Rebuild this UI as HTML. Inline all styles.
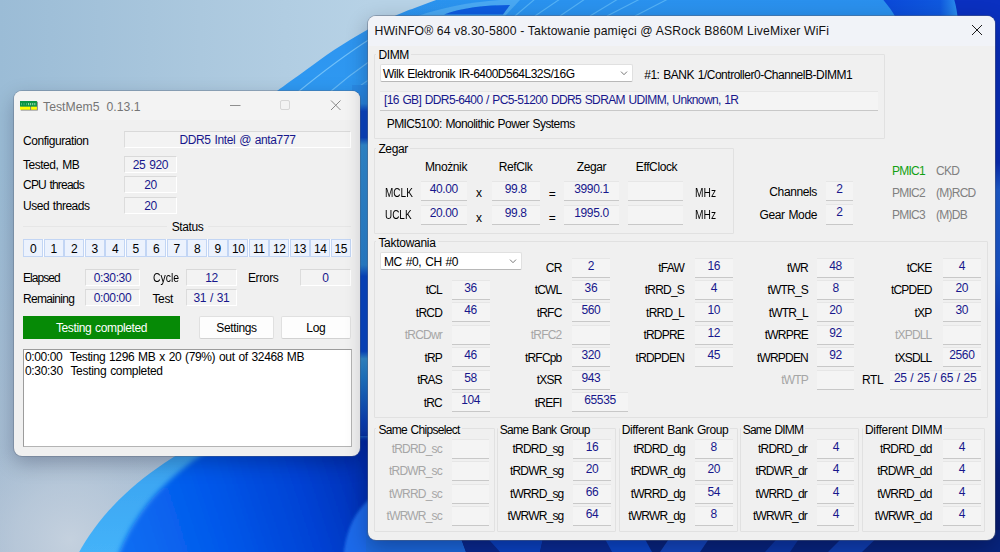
<!DOCTYPE html><html lang="pl"><head><meta charset="utf-8"><title>Desktop</title><style>
*{box-sizing:border-box;margin:0;padding:0}
html,body{width:1000px;height:552px;overflow:hidden;background:#a9c2da}
body{position:relative;font-family:"Liberation Sans",sans-serif;font-size:12px;color:#000;letter-spacing:-0.38px;word-spacing:0.9px}
.abs{position:absolute}
.t{position:absolute;white-space:pre;line-height:14px;height:14px}
.r{text-align:right}
.c{text-align:center}
.nv{color:#17178c}
.gy{color:#a6a6a6}
.g2{color:#808080}
.win{position:absolute;background:#f0f0f0;border-radius:8px;box-shadow:0 0 0 1px rgba(90,100,120,.45),0 8px 22px rgba(0,0,30,.32)}
.tb{position:absolute;left:0;top:0;right:0;background:#f3f3f3;border-radius:8px 8px 0 0}
.ttl{position:absolute;white-space:pre;font-size:12.2px;letter-spacing:0.15px;word-spacing:0;line-height:16px}
.box{position:absolute;background:#f3f3f3;border:1px solid #e3e3e3;border-top-color:#d9d9d9;border-left-color:#dcdcdc;border-bottom-color:#fff;border-right-color:#fff;text-align:center;white-space:pre;color:#17178c}
.vb{position:absolute;background:#f4f4f4;border-bottom:1px solid #c8c8c8;border-top:1px solid #e6e6e6;text-align:center;white-space:pre;color:#17178c}
.grp{position:absolute;border:1px solid #e1e1e1;border-radius:1px}
.gl{position:absolute;white-space:pre;background:#f0f0f0;line-height:14px;padding:0 2px}
.btn{position:absolute;background:#fdfdfd;border:1px solid #e0e0e0;border-bottom-color:#d2d2d2;border-radius:2px;text-align:center;white-space:pre}
</style></head><body>
<svg class="abs" style="left:0;top:0" width="1000" height="552" viewBox="0 0 1000 552">
<defs>
<linearGradient id="bg" x1="0" y1="0" x2="1" y2="0"><stop offset="0" stop-color="#9bbcd6"/><stop offset="0.2" stop-color="#abc8de"/><stop offset="0.37" stop-color="#b7d2e6"/><stop offset="1" stop-color="#b7d2e6"/></linearGradient>
<radialGradient id="bgl" gradientUnits="userSpaceOnUse" cx="70" cy="540" r="110"><stop offset="0" stop-color="#c6d2df" stop-opacity="0.95"/><stop offset="0.5" stop-color="#bccbdb" stop-opacity="0.7"/><stop offset="1" stop-color="#b4c6d8" stop-opacity="0"/></radialGradient>
<linearGradient id="bgv" x1="0" y1="0" x2="0" y2="1"><stop offset="0.3" stop-color="#afbdd0" stop-opacity="0"/><stop offset="1" stop-color="#afbdd0" stop-opacity="0.75"/></linearGradient>
<linearGradient id="p1" x1="0" y1="1" x2="1" y2="0"><stop offset="0" stop-color="#2f9af2"/><stop offset="1" stop-color="#2a8eec"/></linearGradient>
<linearGradient id="band" x1="0" y1="0" x2="0" y2="1"><stop offset="0" stop-color="#389fee"/><stop offset="1" stop-color="#45b4fa"/></linearGradient>
<linearGradient id="p2" gradientUnits="userSpaceOnUse" x1="130" y1="540" x2="372" y2="462"><stop offset="0" stop-color="#0a6cf2"/><stop offset="0.35" stop-color="#0458ea"/><stop offset="0.7" stop-color="#0342d4"/><stop offset="1" stop-color="#022cae"/></linearGradient>
<linearGradient id="tsr" x1="0" y1="0" x2="1" y2="0"><stop offset="0" stop-color="#0a48d8"/><stop offset="0.5" stop-color="#0f58de"/><stop offset="0.64" stop-color="#2a8cec"/><stop offset="1" stop-color="#2a8cec"/></linearGradient>
<filter id="b1"><feGaussianBlur stdDeviation="0.7"/></filter>
<filter id="b2"><feGaussianBlur stdDeviation="1.4"/></filter>
<filter id="b3"><feGaussianBlur stdDeviation="2.5"/></filter>
<filter id="b6"><feGaussianBlur stdDeviation="6"/></filter>
</defs>
<rect width="1000" height="552" fill="url(#bg)"/>
<rect width="400" height="552" fill="url(#bgv)"/>
<rect width="400" height="552" fill="url(#bgl)"/>
<!-- top petal -->
<path d="M248 113 C250.3 111.2,257.2 105.7,262 102 C266.8 98.3,269.7 96.3,277 91 C284.3 85.7,296.5 76.8,306 70 C315.5 63.2,323.8 56.7,334 50 C344.2 43.3,356.3 35.9,367 30 C377.7 24.1,389.2 18.6,398 14.6 C406.8 10.6,412.7 8.8,420 6 C427.3 3.2,433.7 0.7,442 -2 C450.3 -4.7,465.3 -8.7,470 -10 L 1000 -9 L 1000 120 L 248 120 Z" fill="url(#p1)" filter="url(#b1)"/>
<path d="M298 92 C 325 70, 348 53, 370 39" stroke="#7cc8fa" stroke-width="1.1" fill="none" opacity=".85"/>
<path d="M330 92 C 345 79, 357 70, 370 61" stroke="#7cc8fa" stroke-width="1.1" fill="none" opacity=".7"/>
<path d="M352 92 C 358 87, 364 83, 370 79" stroke="#7cc8fa" stroke-width="1.1" fill="none" opacity=".6"/>
<!-- top strip details -->
<path d="M418 16 C 440 8, 470 2, 500 0 L 520 0 L 505 16 Z" fill="#4aa8f2" filter="url(#b1)"/>
<path d="M444 14.5 C 460 8, 485 5, 510 5 L 503 14.5 Z" fill="#0b5ce0" filter="url(#b1)"/>
<g stroke="#63bdf8" stroke-width="1.1" opacity=".75" fill="none"><path d="M515 16 L535 -1"/><path d="M535 16 L560 -1"/><path d="M560 16 L585 -1"/><path d="M590 16 L618 -1"/><path d="M607 16 L640 -1"/><path d="M635 16 L668 -1"/></g>
<path d="M880 -4 C 886 3, 892 10, 897 20 L 1000 20 L 1000 -4 Z" fill="url(#tsr)"/>
<path d="M953 -4 C 956 4, 957 12, 958 20 L 1000 20 L 1000 -4 Z" fill="#0a30c0"/>
<linearGradient id="rs" x1="0" y1="0" x2="0" y2="1"><stop offset="0" stop-color="#0a30c0"/><stop offset="0.27" stop-color="#0a2eb8"/><stop offset="0.32" stop-color="#1f60d4"/><stop offset="0.48" stop-color="#1a58d0"/><stop offset="0.55" stop-color="#0c3cc0"/><stop offset="0.72" stop-color="#0a34b0"/><stop offset="0.85" stop-color="#08207e"/><stop offset="1" stop-color="#061a6a"/></linearGradient>
<rect x="988" y="18" width="12" height="536" fill="url(#rs)"/>
<linearGradient id="mid" gradientUnits="userSpaceOnUse" x1="0" y1="85" x2="0" y2="460"><stop offset="0" stop-color="#2a8ce8"/><stop offset="0.05" stop-color="#2a8ce8"/><stop offset="0.07" stop-color="#0c4cd2"/><stop offset="0.14" stop-color="#0c4cd2"/><stop offset="0.16" stop-color="#389ee8"/><stop offset="0.48" stop-color="#2f92e4"/><stop offset="0.51" stop-color="#0a50d8"/><stop offset="0.71" stop-color="#0a50d8"/><stop offset="0.73" stop-color="#3a9ce0"/><stop offset="0.78" stop-color="#2488dc"/><stop offset="0.9" stop-color="#0c48c8"/><stop offset="1" stop-color="#0a2c98"/></linearGradient>
<rect x="352" y="85" width="24" height="380" fill="url(#mid)"/>
<!-- bottom-left petal -->
<path d="M211 436 C 160 462, 104 500, 74 562 L 400 562 L 400 436 Z" fill="url(#band)" filter="url(#b1)"/>
<path d="M234 436 C 182 462, 134 505, 116 562 L 400 562 L 400 436 Z" fill="url(#p2)" filter="url(#b3)"/>
<path d="M343 560 C 345 535, 352 513, 372 497 L 400 497 L 400 560 Z" fill="#1b6aea" filter="url(#b2)"/>
<!-- bottom strip -->
<rect x="366" y="530" width="634" height="22" fill="#08257e"/>
<path d="M366 552 L366 530 L458 530 L466 552 Z" fill="#1c6ade"/>
<path d="M466 552 L458 530 L480 530 L500 552 Z" fill="#0a2a90"/>
<path d="M500 552 L480 530 L545 530 L540 552 Z" fill="#0b44c4"/>
<path d="M540 552 L545 530 L600 530 L612 552 Z" fill="#0a2c94"/>
<path d="M612 552 L600 530 L640 530 L652 552 Z" fill="#0c48ca"/>
<path d="M660 552 L675 530 L715 530 L700 552 Z" fill="#1448c0"/>
<path d="M765 552 L785 530 L805 530 L790 552 Z" fill="#0c38a8"/>
<path d="M828 552 L850 530 L885 530 L862 552 Z" fill="#1040b4"/>
</svg>
<div class="win" style="left:14px;top:91px;width:346px;height:365px;box-shadow:0 0 0 1px rgba(90,100,120,.35),0 7px 20px rgba(0,0,30,.26)">
<div class="tb" style="height:29px"></div>
</div>
<svg class="abs" style="left:19px;top:100px" width="20" height="12" viewBox="19 100 20 12">
<rect x="20.8" y="101.8" width="17" height="8.7" fill="#5a5a5a" opacity=".75"/>
<rect x="20" y="101" width="16.9" height="5.8" fill="#0b9444"/>
<g fill="#9ad9b0"><rect x="21" y="103" width=".8" height="2.2" opacity=".6"/><rect x="23.6" y="103" width=".8" height="2.2" opacity=".5"/><rect x="26" y="103" width=".8" height="2.2" opacity=".5"/><rect x="28.1" y="103" width="1" height="2.2"/><rect x="30.1" y="103" width="1" height="2.2"/><rect x="32.2" y="103" width="1" height="2.2"/><rect x="34.3" y="103" width="1" height="2.2"/></g>
<rect x="20" y="106.7" width="10.1" height="3" fill="#ffff00"/><rect x="31.1" y="106.7" width="5.8" height="3" fill="#ffff00"/>
</svg>
<div class="ttl" style="left:43px;top:98.8px;color:#757575;letter-spacing:0.05px;word-spacing:0">TestMem5  0.13.1</div>
<svg class="abs" style="left:225px;top:95px" width="125" height="20" viewBox="0 0 125 20" fill="none">
<path d="M5 10.5 H15.5" stroke="#8e8e8e" stroke-width="1"/>
<rect x="55.5" y="5.5" width="9" height="9" rx="1.5" stroke="#d6d6d6" stroke-width="1"/>
<path d="M106 5.5 L115.5 15 M115.5 5.5 L106 15" stroke="#888" stroke-width="1"/>
</svg>
<div class="t " style="left:23px;top:133.6px;letter-spacing:-0.449px;">Configuration</div>
<div class="box" style="left:124px;top:131px;width:227px;height:17px;line-height:16.4px;">DDR5 Intel @ anta777</div>
<div class="t " style="left:23px;top:157.6px;letter-spacing:-0.471px;">Tested, MB</div>
<div class="box" style="left:124px;top:155.5px;width:53px;height:17.0px;line-height:16.4px;">25 920</div>
<div class="t " style="left:23px;top:178.1px;letter-spacing:-0.791px;">CPU threads</div>
<div class="box" style="left:124px;top:176px;width:53px;height:17px;line-height:16.4px;">20</div>
<div class="t " style="left:23px;top:199.1px;letter-spacing:-0.480px;">Used threads</div>
<div class="box" style="left:124px;top:196.5px;width:53px;height:17.0px;line-height:16.4px;">20</div>
<div class="abs" style="left:23px;top:226px;width:328px;height:1px;background:#e6e6e6"></div>
<div class="t c" style="left:167px;top:220px;width:41px;background:#f0f0f0">Status</div>
<div class="abs" style="left:23px;top:238.8px;width:328.5px;height:18.2px;background:#fbfcff"></div>
<div class="abs c" style="left:23.3px;top:239px;width:19.9px;height:17.8px;line-height:18px;background:#ecf2fd;border:1px solid #c2d5f4;white-space:pre">0</div>
<div class="abs c" style="left:43.8px;top:239px;width:19.9px;height:17.8px;line-height:18px;background:#ecf2fd;border:1px solid #c2d5f4;white-space:pre">1</div>
<div class="abs c" style="left:64.3px;top:239px;width:19.9px;height:17.8px;line-height:18px;background:#ecf2fd;border:1px solid #c2d5f4;white-space:pre">2</div>
<div class="abs c" style="left:84.8px;top:239px;width:19.9px;height:17.8px;line-height:18px;background:#ecf2fd;border:1px solid #c2d5f4;white-space:pre">3</div>
<div class="abs c" style="left:105.3px;top:239px;width:19.9px;height:17.8px;line-height:18px;background:#ecf2fd;border:1px solid #c2d5f4;white-space:pre">4</div>
<div class="abs c" style="left:125.8px;top:239px;width:19.9px;height:17.8px;line-height:18px;background:#ecf2fd;border:1px solid #c2d5f4;white-space:pre">5</div>
<div class="abs c" style="left:146.3px;top:239px;width:19.9px;height:17.8px;line-height:18px;background:#ecf2fd;border:1px solid #c2d5f4;white-space:pre">6</div>
<div class="abs c" style="left:166.8px;top:239px;width:19.9px;height:17.8px;line-height:18px;background:#ecf2fd;border:1px solid #c2d5f4;white-space:pre">7</div>
<div class="abs c" style="left:187.3px;top:239px;width:19.9px;height:17.8px;line-height:18px;background:#ecf2fd;border:1px solid #c2d5f4;white-space:pre">8</div>
<div class="abs c" style="left:207.8px;top:239px;width:19.9px;height:17.8px;line-height:18px;background:#ecf2fd;border:1px solid #c2d5f4;white-space:pre">9</div>
<div class="abs c" style="left:228.3px;top:239px;width:19.9px;height:17.8px;line-height:18px;background:#ecf2fd;border:1px solid #c2d5f4;white-space:pre">10</div>
<div class="abs c" style="left:248.8px;top:239px;width:19.9px;height:17.8px;line-height:18px;background:#ecf2fd;border:1px solid #c2d5f4;white-space:pre">11</div>
<div class="abs c" style="left:269.3px;top:239px;width:19.9px;height:17.8px;line-height:18px;background:#ecf2fd;border:1px solid #c2d5f4;white-space:pre">12</div>
<div class="abs c" style="left:289.8px;top:239px;width:19.9px;height:17.8px;line-height:18px;background:#ecf2fd;border:1px solid #c2d5f4;white-space:pre">13</div>
<div class="abs c" style="left:310.3px;top:239px;width:19.9px;height:17.8px;line-height:18px;background:#ecf2fd;border:1px solid #c2d5f4;white-space:pre">14</div>
<div class="abs c" style="left:330.8px;top:239px;width:19.9px;height:17.8px;line-height:18px;background:#ecf2fd;border:1px solid #c2d5f4;white-space:pre">15</div>
<div class="t " style="left:23px;top:271.1px;letter-spacing:-0.929px;">Elapsed</div>
<div class="box" style="left:85px;top:269px;width:55px;height:16.5px;line-height:15.9px;line-height:17.6px">0:30:30</div>
<div class="t " style="left:152.5px;top:271.1px;letter-spacing:0;transform-origin:0 50%;transform:scaleX(0.870);">Cycle</div>
<div class="box" style="left:186px;top:269px;width:51px;height:16.5px;line-height:15.9px;line-height:17.6px">12</div>
<div class="t " style="left:248px;top:271.1px;">Errors</div>
<div class="box" style="left:300px;top:269px;width:51px;height:16.5px;line-height:15.9px;line-height:17.6px">0</div>
<div class="t " style="left:23px;top:291.6px;letter-spacing:-0.684px;">Remaining</div>
<div class="box" style="left:85px;top:289px;width:55px;height:17px;line-height:16.4px;">0:00:00</div>
<div class="t " style="left:152.5px;top:291.6px;">Test</div>
<div class="box" style="left:186px;top:289px;width:51px;height:17px;line-height:16.4px;">31 / 31</div>
<div class="abs c" style="left:23px;top:316px;width:157px;height:23px;line-height:25px;background:#068a06;color:#fff;white-space:pre">Testing completed</div>
<div class="btn" style="left:199px;top:316px;width:75px;height:23px;line-height:23px">Settings</div>
<div class="btn" style="left:280.6px;top:316px;width:70.4px;height:23px;line-height:23px">Log</div>
<div class="abs" style="left:23px;top:348.5px;width:329px;height:98px;background:#fff;border:1px solid #b4b4b4;border-top-color:#9c9c9c;border-left-color:#9c9c9c"></div>
<div class="t " style="left:25px;top:350.1px;letter-spacing:-0.381px;">0:00:00  Testing 1296 MB x 20 (79%) out of 32468 MB</div>
<div class="t " style="left:25px;top:363.6px;letter-spacing:-0.317px;">0:30:30  Testing completed</div>
<div class="win" style="left:368px;top:16px;width:627px;height:524px">
<div class="tb" style="height:30px;background:#f1f3f8"></div>
</div>
<div class="ttl" style="left:374.5px;top:23.2px;color:#111">HWiNFO® 64 v8.30-5800 - Taktowanie pamięci @ ASRock B860M LiveMixer WiFi</div>
<svg class="abs" style="left:969.2px;top:22px" width="16" height="16" viewBox="0 0 16 16" fill="none"><path d="M3 3 L13 13 M13 3 L3 13" stroke="#1c1c1c" stroke-width="1"/></svg>
<div class="grp" style="left:374px;top:54px;width:511px;height:85px"></div>
<div class="gl" style="left:376.4px;top:48.0px;">DIMM</div>
<div class="abs" style="left:380px;top:64px;width:253px;height:18px;background:#fff;border:1px solid #e0e0e0;border-bottom-color:#b8b8b8;border-radius:2px"></div>
<div class="t " style="left:383px;top:67.1px;letter-spacing:-0.507px;">Wilk Elektronik IR-6400D564L32S/16G</div>
<svg class="abs" style="left:619px;top:69px" width="10" height="8" viewBox="0 0 10 8" fill="none"><path d="M2 2.6 L5 5.7 L8 2.6" stroke="#6a6a6a" stroke-width="0.9"/></svg>
<div class="t " style="left:644.2px;top:68.1px;letter-spacing:-0.481px;">#1: BANK 1/Controller0-ChannelB-DIMM1</div>
<div class="vb" style="left:380px;top:90.5px;width:498px;height:20.5px;line-height:15.6px;"></div>
<div class="t nv" style="left:384px;top:92.6px;letter-spacing:-0.631px;">[16 GB] DDR5-6400 / PC5-51200 DDR5 SDRAM UDIMM, Unknown, 1R</div>
<div class="t " style="left:386.7px;top:117.3px;letter-spacing:-0.554px;">PMIC5100: Monolithic Power Systems</div>
<div class="grp" style="left:374px;top:148px;width:360px;height:86px"></div>
<div class="gl" style="left:376.4px;top:142.4px;">Zegar</div>
<div class="t c " style="left:346.0px;top:159.6px;width:200px;">Mnożnik</div>
<div class="t c " style="left:415.5px;top:159.6px;width:200px;">RefClk</div>
<div class="t c " style="left:491.5px;top:159.6px;width:200px;">Zegar</div>
<div class="t c " style="left:556.5px;top:159.6px;width:200px;">EffClock</div>
<div class="t " style="left:385px;top:185.8px;letter-spacing:0;transform-origin:0 50%;transform:scaleX(0.834);">MCLK</div>
<div class="vb" style="left:421px;top:180.5px;width:45.60000000000002px;height:20.19999999999999px;line-height:15.3px;">40.00</div>
<div class="t " style="left:476px;top:186.4px;">x</div>
<div class="vb" style="left:491.5px;top:180.5px;width:48.5px;height:20.19999999999999px;line-height:15.3px;">99.8</div>
<div class="t " style="left:548.7px;top:186.5px;">=</div>
<div class="vb" style="left:564px;top:180.5px;width:55px;height:20.19999999999999px;line-height:15.3px;">3990.1</div>
<div class="vb" style="left:627.5px;top:180.5px;width:55.5px;height:20.19999999999999px;line-height:15.3px;"></div>
<div class="t " style="left:694.5px;top:185.8px;letter-spacing:0;transform-origin:0 50%;transform:scaleX(0.851);">MHz</div>
<div class="t " style="left:385px;top:208.4px;letter-spacing:0;transform-origin:0 50%;transform:scaleX(0.828);">UCLK</div>
<div class="vb" style="left:421px;top:205.10000000000002px;width:45.60000000000002px;height:20.19999999999999px;line-height:15.3px;">20.00</div>
<div class="t " style="left:476px;top:211.0px;">x</div>
<div class="vb" style="left:491.5px;top:205.10000000000002px;width:48.5px;height:20.19999999999999px;line-height:15.3px;">99.8</div>
<div class="t " style="left:548.7px;top:211.1px;">=</div>
<div class="vb" style="left:564px;top:205.10000000000002px;width:55px;height:20.19999999999999px;line-height:15.3px;">1995.0</div>
<div class="vb" style="left:627.5px;top:205.10000000000002px;width:55.5px;height:20.19999999999999px;line-height:15.3px;"></div>
<div class="t " style="left:694.5px;top:208.4px;letter-spacing:0;transform-origin:0 50%;transform:scaleX(0.851);">MHz</div>
<div class="t r " style="left:677px;top:185.4px;width:140px;">Channels</div>
<div class="vb" style="left:826px;top:180.5px;width:27px;height:20.19999999999999px;line-height:15.3px;">2</div>
<div class="t r " style="left:677px;top:207.9px;width:140px;">Gear Mode</div>
<div class="vb" style="left:826px;top:204.4px;width:27px;height:20.19999999999999px;line-height:15.3px;">2</div>
<div class="t " style="left:892px;top:163.6px;letter-spacing:-0.75px;color:#12a012">PMIC1</div>
<div class="t g2" style="left:936px;top:163.6px;letter-spacing:-0.75px;">CKD</div>
<div class="t g2" style="left:892px;top:185.8px;letter-spacing:-0.75px;">PMIC2</div>
<div class="t g2" style="left:936px;top:185.8px;letter-spacing:-0.75px;">(M)RCD</div>
<div class="t g2" style="left:892px;top:208.1px;letter-spacing:-0.75px;">PMIC3</div>
<div class="t g2" style="left:936px;top:208.1px;letter-spacing:-0.75px;">(M)DB</div>
<div class="grp" style="left:374px;top:241px;width:614px;height:177px"></div>
<div class="gl" style="left:376.4px;top:235.8px;letter-spacing:-0.283px;">Taktowania</div>
<div class="abs" style="left:380px;top:252px;width:142px;height:17.5px;background:#fff;border:1px solid #e0e0e0;border-bottom-color:#b8b8b8;border-radius:2px"></div>
<div class="t " style="left:384px;top:254.6px;">MC #0, CH #0</div>
<svg class="abs" style="left:508px;top:257px" width="10" height="8" viewBox="0 0 10 8" fill="none"><path d="M2 2.6 L5 5.7 L8 2.6" stroke="#6a6a6a" stroke-width="0.9"/></svg>
<div class="t r " style="left:302px;top:283.4px;width:140px;letter-spacing:-0.8px">tCL</div>
<div class="vb" style="left:451.7px;top:279.7px;width:37.900000000000034px;height:19.899999999999977px;line-height:15.0px;">36</div>
<div class="t r " style="left:302px;top:305.9px;width:140px;letter-spacing:-0.8px">tRCD</div>
<div class="vb" style="left:451.7px;top:302.2px;width:37.900000000000034px;height:19.899999999999977px;line-height:15.0px;">46</div>
<div class="t r gy" style="left:302px;top:328.4px;width:140px;letter-spacing:-0.8px">tRCDwr</div>
<div class="vb" style="left:451.7px;top:324.7px;width:37.900000000000034px;height:19.899999999999977px;line-height:15.0px;"></div>
<div class="t r " style="left:302px;top:350.9px;width:140px;letter-spacing:-0.8px">tRP</div>
<div class="vb" style="left:451.7px;top:347.2px;width:37.900000000000034px;height:19.899999999999977px;line-height:15.0px;">46</div>
<div class="t r " style="left:302px;top:373.4px;width:140px;letter-spacing:-0.8px">tRAS</div>
<div class="vb" style="left:451.7px;top:369.7px;width:37.900000000000034px;height:19.899999999999977px;line-height:15.0px;">58</div>
<div class="t r " style="left:302px;top:395.9px;width:140px;letter-spacing:-0.8px">tRC</div>
<div class="vb" style="left:451.7px;top:392.2px;width:37.900000000000034px;height:19.899999999999977px;line-height:15.0px;">104</div>
<div class="t r " style="left:421.5px;top:261.4px;width:140px;letter-spacing:-0.8px">CR</div>
<div class="vb" style="left:572px;top:257.7px;width:37.799999999999955px;height:19.899999999999977px;line-height:15.0px;">2</div>
<div class="t r " style="left:421.5px;top:283.4px;width:140px;letter-spacing:-0.8px">tCWL</div>
<div class="vb" style="left:572px;top:279.7px;width:37.799999999999955px;height:19.899999999999977px;line-height:15.0px;">36</div>
<div class="t r " style="left:421.5px;top:305.9px;width:140px;letter-spacing:-0.8px">tRFC</div>
<div class="vb" style="left:572px;top:302.2px;width:37.799999999999955px;height:19.899999999999977px;line-height:15.0px;">560</div>
<div class="t r gy" style="left:421.5px;top:328.4px;width:140px;letter-spacing:-0.8px">tRFC2</div>
<div class="vb" style="left:572px;top:324.7px;width:37.799999999999955px;height:19.899999999999977px;line-height:15.0px;"></div>
<div class="t r " style="left:421.5px;top:350.9px;width:140px;letter-spacing:-0.8px">tRFCpb</div>
<div class="vb" style="left:572px;top:347.2px;width:37.799999999999955px;height:19.899999999999977px;line-height:15.0px;">320</div>
<div class="t r " style="left:421.5px;top:373.4px;width:140px;letter-spacing:-0.8px">tXSR</div>
<div class="vb" style="left:572px;top:369.7px;width:37.799999999999955px;height:19.899999999999977px;line-height:15.0px;">943</div>
<div class="t r " style="left:421.5px;top:395.9px;width:140px;letter-spacing:-0.8px">tREFI</div>
<div class="vb" style="left:572px;top:392.2px;width:56px;height:19.899999999999977px;line-height:15.0px;">65535</div>
<div class="t r " style="left:544px;top:261.4px;width:140px;letter-spacing:-0.8px">tFAW</div>
<div class="vb" style="left:695px;top:257.7px;width:37.60000000000002px;height:19.899999999999977px;line-height:15.0px;">16</div>
<div class="t r " style="left:544px;top:283.4px;width:140px;letter-spacing:-0.8px">tRRD_S</div>
<div class="vb" style="left:695px;top:279.7px;width:37.60000000000002px;height:19.899999999999977px;line-height:15.0px;">4</div>
<div class="t r " style="left:544px;top:305.9px;width:140px;letter-spacing:-0.8px">tRRD_L</div>
<div class="vb" style="left:695px;top:302.2px;width:37.60000000000002px;height:19.899999999999977px;line-height:15.0px;">10</div>
<div class="t r " style="left:544px;top:328.4px;width:140px;letter-spacing:-0.8px">tRDPRE</div>
<div class="vb" style="left:695px;top:324.7px;width:37.60000000000002px;height:19.899999999999977px;line-height:15.0px;">12</div>
<div class="t r " style="left:544px;top:350.9px;width:140px;letter-spacing:-0.8px">tRDPDEN</div>
<div class="vb" style="left:695px;top:347.2px;width:37.60000000000002px;height:19.899999999999977px;line-height:15.0px;">45</div>
<div class="t r " style="left:668px;top:261.4px;width:140px;letter-spacing:-0.8px">tWR</div>
<div class="vb" style="left:816.8px;top:257.7px;width:37.5px;height:19.899999999999977px;line-height:15.0px;">48</div>
<div class="t r " style="left:668px;top:283.4px;width:140px;letter-spacing:-0.8px">tWTR_S</div>
<div class="vb" style="left:816.8px;top:279.7px;width:37.5px;height:19.899999999999977px;line-height:15.0px;">8</div>
<div class="t r " style="left:668px;top:305.9px;width:140px;letter-spacing:-0.8px">tWTR_L</div>
<div class="vb" style="left:816.8px;top:302.2px;width:37.5px;height:19.899999999999977px;line-height:15.0px;">20</div>
<div class="t r " style="left:668px;top:328.4px;width:140px;letter-spacing:-0.8px">tWRPRE</div>
<div class="vb" style="left:816.8px;top:324.7px;width:37.5px;height:19.899999999999977px;line-height:15.0px;">92</div>
<div class="t r " style="left:668px;top:350.9px;width:140px;letter-spacing:-0.8px">tWRPDEN</div>
<div class="vb" style="left:816.8px;top:347.2px;width:37.5px;height:19.899999999999977px;line-height:15.0px;">92</div>
<div class="t r gy" style="left:668px;top:373.4px;width:140px;letter-spacing:-0.8px">tWTP</div>
<div class="vb" style="left:816.8px;top:369.7px;width:37.5px;height:19.899999999999977px;line-height:15.0px;"></div>
<div class="t r " style="left:791.5px;top:261.4px;width:140px;letter-spacing:-0.8px">tCKE</div>
<div class="vb" style="left:943.2px;top:257.7px;width:37.39999999999998px;height:19.899999999999977px;line-height:15.0px;">4</div>
<div class="t r " style="left:791.5px;top:283.4px;width:140px;letter-spacing:-0.8px">tCPDED</div>
<div class="vb" style="left:943.2px;top:279.7px;width:37.39999999999998px;height:19.899999999999977px;line-height:15.0px;">20</div>
<div class="t r " style="left:791.5px;top:305.9px;width:140px;letter-spacing:-0.8px">tXP</div>
<div class="vb" style="left:943.2px;top:302.2px;width:37.39999999999998px;height:19.899999999999977px;line-height:15.0px;">30</div>
<div class="t r gy" style="left:791.5px;top:328.4px;width:140px;letter-spacing:-0.8px">tXPDLL</div>
<div class="vb" style="left:943.2px;top:324.7px;width:37.39999999999998px;height:19.899999999999977px;line-height:15.0px;"></div>
<div class="t r " style="left:791.5px;top:350.9px;width:140px;letter-spacing:-0.8px">tXSDLL</div>
<div class="vb" style="left:943.2px;top:347.2px;width:37.39999999999998px;height:19.899999999999977px;line-height:15.0px;">2560</div>
<div class="t " style="left:862px;top:373.4px;">RTL</div>
<div class="vb" style="left:889.5px;top:369.7px;width:91.10000000000002px;height:19.899999999999977px;line-height:15.0px;">25 / 25 / 65 / 25</div>
<div class="grp" style="left:374px;top:428px;width:120.5px;height:103.5px"></div>
<div class="gl"  style="left:376.4px;top:423.1px;letter-spacing:-0.694px;">Same Chipselect</div>
<div class="t r gy" style="left:302px;top:442.0px;width:140px;letter-spacing:-0.8px">tRDRD_sc</div>
<div class="vb" style="left:451.7px;top:438.9px;width:37.80000000000001px;height:19.899999999999977px;line-height:15.0px;"></div>
<div class="t r gy" style="left:302px;top:464.4px;width:140px;letter-spacing:-0.8px">tRDWR_sc</div>
<div class="vb" style="left:451.7px;top:461.29999999999995px;width:37.80000000000001px;height:19.899999999999977px;line-height:15.0px;"></div>
<div class="t r gy" style="left:302px;top:486.8px;width:140px;letter-spacing:-0.8px">tWRRD_sc</div>
<div class="vb" style="left:451.7px;top:483.7px;width:37.80000000000001px;height:19.899999999999977px;line-height:15.0px;"></div>
<div class="t r gy" style="left:302px;top:509.2px;width:140px;letter-spacing:-0.8px">tWRWR_sc</div>
<div class="vb" style="left:451.7px;top:506.0999999999999px;width:37.80000000000001px;height:19.899999999999977px;line-height:15.0px;"></div>
<div class="grp" style="left:497px;top:428px;width:119px;height:103.5px"></div>
<div class="gl" style="left:497.8px;top:423.1px;letter-spacing:-0.702px;">Same Bank Group</div>
<div class="t r " style="left:423.5px;top:442.0px;width:140px;letter-spacing:-0.8px">tRDRD_sg</div>
<div class="vb" style="left:573px;top:438.9px;width:38px;height:19.899999999999977px;line-height:15.0px;">16</div>
<div class="t r " style="left:423.5px;top:464.4px;width:140px;letter-spacing:-0.8px">tRDWR_sg</div>
<div class="vb" style="left:573px;top:461.29999999999995px;width:38px;height:19.899999999999977px;line-height:15.0px;">20</div>
<div class="t r " style="left:423.5px;top:486.8px;width:140px;letter-spacing:-0.8px">tWRRD_sg</div>
<div class="vb" style="left:573px;top:483.7px;width:38px;height:19.899999999999977px;line-height:15.0px;">66</div>
<div class="t r " style="left:423.5px;top:509.2px;width:140px;letter-spacing:-0.8px">tWRWR_sg</div>
<div class="vb" style="left:573px;top:506.0999999999999px;width:38px;height:19.899999999999977px;line-height:15.0px;">64</div>
<div class="grp" style="left:618.5px;top:428px;width:119.0px;height:103.5px"></div>
<div class="gl" style="left:619.8px;top:423.1px;letter-spacing:-0.390px;">Different Bank Group</div>
<div class="t r " style="left:545px;top:442.0px;width:140px;letter-spacing:-0.8px">tRDRD_dg</div>
<div class="vb" style="left:694.7px;top:438.9px;width:38.0px;height:19.899999999999977px;line-height:15.0px;">8</div>
<div class="t r " style="left:545px;top:464.4px;width:140px;letter-spacing:-0.8px">tRDWR_dg</div>
<div class="vb" style="left:694.7px;top:461.29999999999995px;width:38.0px;height:19.899999999999977px;line-height:15.0px;">20</div>
<div class="t r " style="left:545px;top:486.8px;width:140px;letter-spacing:-0.8px">tWRRD_dg</div>
<div class="vb" style="left:694.7px;top:483.7px;width:38.0px;height:19.899999999999977px;line-height:15.0px;">54</div>
<div class="t r " style="left:545px;top:509.2px;width:140px;letter-spacing:-0.8px">tWRWR_dg</div>
<div class="vb" style="left:694.7px;top:506.0999999999999px;width:38.0px;height:19.899999999999977px;line-height:15.0px;">8</div>
<div class="grp" style="left:740px;top:428px;width:119px;height:103.5px"></div>
<div class="gl" style="left:740.7px;top:423.1px;letter-spacing:-0.772px;">Same DIMM</div>
<div class="t r " style="left:667px;top:442.0px;width:140px;letter-spacing:-0.8px">tRDRD_dr</div>
<div class="vb" style="left:817.2px;top:438.9px;width:37.19999999999993px;height:19.899999999999977px;line-height:15.0px;">4</div>
<div class="t r " style="left:667px;top:464.4px;width:140px;letter-spacing:-0.8px">tRDWR_dr</div>
<div class="vb" style="left:817.2px;top:461.29999999999995px;width:37.19999999999993px;height:19.899999999999977px;line-height:15.0px;">4</div>
<div class="t r " style="left:667px;top:486.8px;width:140px;letter-spacing:-0.8px">tWRRD_dr</div>
<div class="vb" style="left:817.2px;top:483.7px;width:37.19999999999993px;height:19.899999999999977px;line-height:15.0px;">4</div>
<div class="t r " style="left:667px;top:509.2px;width:140px;letter-spacing:-0.8px">tWRWR_dr</div>
<div class="vb" style="left:817.2px;top:506.0999999999999px;width:37.19999999999993px;height:19.899999999999977px;line-height:15.0px;">4</div>
<div class="grp" style="left:861.7px;top:428px;width:123.79999999999995px;height:103.5px"></div>
<div class="gl" style="left:863px;top:423.1px;letter-spacing:-0.298px;">Different DIMM</div>
<div class="t r " style="left:791.6px;top:442.0px;width:140px;letter-spacing:-0.8px">tRDRD_dd</div>
<div class="vb" style="left:943.2px;top:438.9px;width:37.39999999999998px;height:19.899999999999977px;line-height:15.0px;">4</div>
<div class="t r " style="left:791.6px;top:464.4px;width:140px;letter-spacing:-0.8px">tRDWR_dd</div>
<div class="vb" style="left:943.2px;top:461.29999999999995px;width:37.39999999999998px;height:19.899999999999977px;line-height:15.0px;">4</div>
<div class="t r " style="left:791.6px;top:486.8px;width:140px;letter-spacing:-0.8px">tWRRD_dd</div>
<div class="vb" style="left:943.2px;top:483.7px;width:37.39999999999998px;height:19.899999999999977px;line-height:15.0px;">4</div>
<div class="t r " style="left:791.6px;top:509.2px;width:140px;letter-spacing:-0.8px">tWRWR_dd</div>
<div class="vb" style="left:943.2px;top:506.0999999999999px;width:37.39999999999998px;height:19.899999999999977px;line-height:15.0px;">4</div>
</body></html>
